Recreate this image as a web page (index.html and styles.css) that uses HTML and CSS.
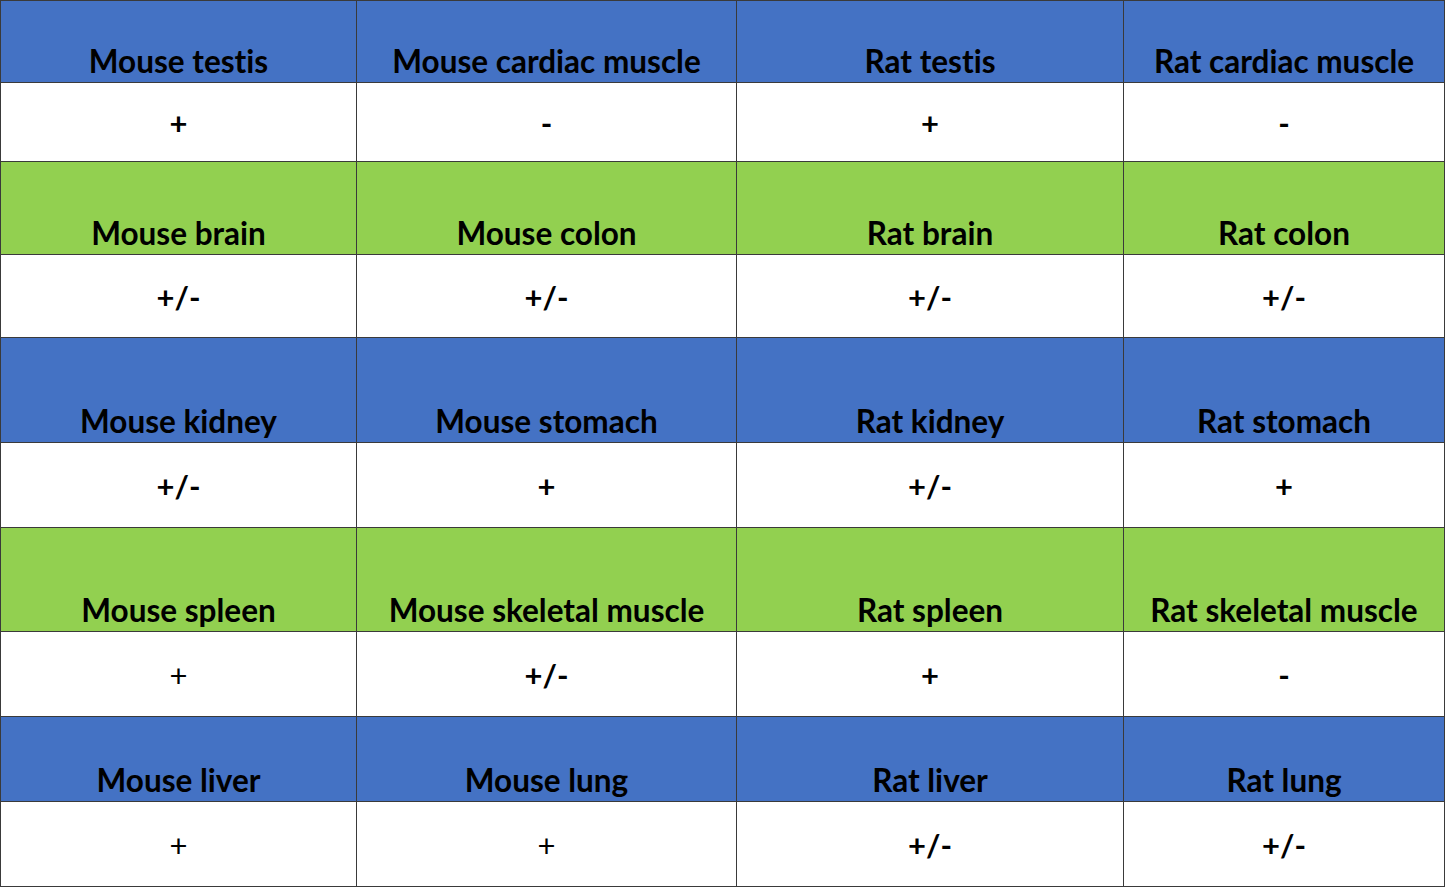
FILE: index.html
```html
<!DOCTYPE html>
<html>
<head>
<meta charset="utf-8">
<link rel="stylesheet" href="styles.css">
</head>
<body>
<table class="grid">
  <colgroup>
    <col class="c1"><col class="c2"><col class="c3"><col class="c4">
  </colgroup>
  <tr class="head blue h1"><th>Mouse testis</th><th>Mouse cardiac muscle</th><th>Rat testis</th><th>Rat cardiac muscle</th></tr>
  <tr class="val v1"><td>+</td><td>-</td><td>+</td><td>-</td></tr>
  <tr class="head green h2"><th>Mouse brain</th><th>Mouse colon</th><th>Rat brain</th><th>Rat colon</th></tr>
  <tr class="val v2"><td>+/-</td><td>+/-</td><td>+/-</td><td>+/-</td></tr>
  <tr class="head blue h3"><th>Mouse kidney</th><th>Mouse stomach</th><th>Rat kidney</th><th>Rat stomach</th></tr>
  <tr class="val v3"><td>+/-</td><td>+</td><td>+/-</td><td>+</td></tr>
  <tr class="head green h4"><th>Mouse spleen</th><th>Mouse skeletal muscle</th><th>Rat spleen</th><th>Rat skeletal muscle</th></tr>
  <tr class="val v4"><td class="thin">+</td><td>+/-</td><td>+</td><td>-</td></tr>
  <tr class="head blue h5"><th>Mouse liver</th><th>Mouse lung</th><th>Rat liver</th><th>Rat lung</th></tr>
  <tr class="val v5"><td class="thin">+</td><td class="thin">+</td><td>+/-</td><td>+/-</td></tr>
</table>
</body>
</html>
```
FILE: styles.css
```css
html, body {
  margin: 0;
  padding: 0;
  background: #ffffff;
}
.grid {
  border-collapse: collapse;
  table-layout: fixed;
  width: 1444px;
  font-family: Lato, "Liberation Sans", sans-serif;
  font-variant-ligatures: none;
  font-feature-settings: "liga" 0, "clig" 0;
  color: #000;
}
.c1 { width: 356px; }
.c2 { width: 380px; }
.c3 { width: 387px; }
.c4 { width: 321px; }
.grid th, .grid td {
  border: 1px solid #3a3a3a;
  padding: 0;
  text-align: center;
  font-weight: 700;
}
.grid th {
  font-size: 31.5px;
  line-height: 36px;
  vertical-align: bottom;
  padding-bottom: 3px;
}
.grid td {
  font-size: 31px;
  line-height: 36px;
  vertical-align: middle;
  padding-top: 1px;
}
.grid td.thin { font-weight: 400; }
.blue th { background: #4472c4; }
.green th { background: #92d050; }
.h1 { height: 82px; }
.v1 { height: 79px; }
.h2 { height: 93px; }
.v2 { height: 83px; }
.h3 { height: 105px; }
.v3 { height: 85px; }
.h4 { height: 104px; }
.v4 { height: 85px; }
.h5 { height: 85px; }
.v5 { height: 85px; }
```
